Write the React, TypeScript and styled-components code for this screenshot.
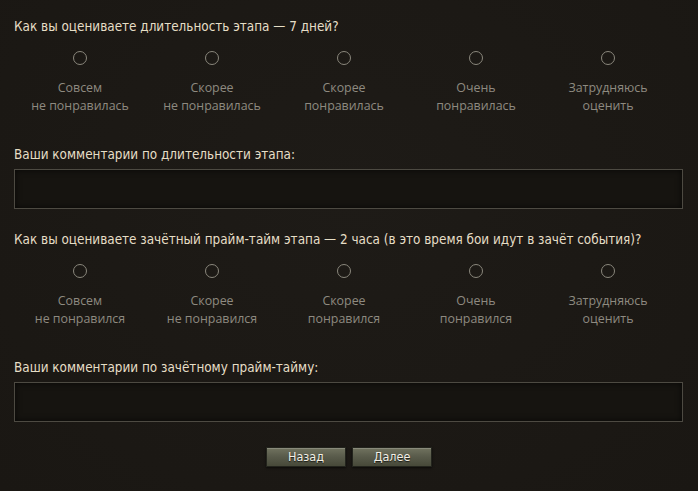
import React from "react";
import styled, { createGlobalStyle } from "styled-components";

const Global = createGlobalStyle`
  html, body { margin: 0; padding: 0; background: #1c1915; }
  body { width: 698px; height: 491px; overflow: hidden; }
`;

const Page = styled.div`
  width: 698px;
  height: 491px;
  box-sizing: border-box;
  padding: 19px 15px 0 14px;
  background: radial-gradient(ellipse at 50% 40%, #1e1b17 0%, #1a1713 100%);
  display: flex;
  flex-direction: column;
`;

const Question = styled.div`
  font-family: "DejaVu Sans Condensed", "DejaVu Sans", sans-serif;
  font-size: 13.4px;
  line-height: 16px;
  color: #e6dec6;
  white-space: nowrap;
`;

const Options = styled.div`
  display: grid;
  grid-template-columns: repeat(5, 132px);
  margin-top: 16px;
`;

const Option = styled.div`
  display: flex;
  flex-direction: column;
  align-items: center;
`;

const Radio = styled.span`
  width: 14px;
  height: 14px;
  box-sizing: border-box;
  border: 1.6px solid #8a877c;
  border-radius: 50%;
`;

const OptLabel = styled.div`
  margin-top: 14px;
  font-family: "Open Sans", sans-serif;
  font-size: 12.4px;
  line-height: 18px;
  color: #8e8a80;
  text-align: center;
  white-space: nowrap;
`;

const CommentLabel = styled.div`
  margin-top: 32px;
  font-family: "DejaVu Sans Condensed", "DejaVu Sans", sans-serif;
  font-size: 13.4px;
  line-height: 16px;
  color: #e6dec6;
`;

const Box = styled.div`
  margin-top: 6px;
  width: 669px;
  height: 40px;
  box-sizing: border-box;
  border: 1px solid #4d4a42;
  background: #161410;
  box-shadow: inset 0 0 6px rgba(0, 0, 0, 0.7);
`;

const Spacer = styled.div<{ $h: number }>`
  height: ${(p) => p.$h}px;
`;

const Buttons = styled.div`
  display: flex;
  justify-content: center;
  gap: 6px;
  margin-top: 25px;
  padding-left: 1px;
`;

const Btn = styled.button`
  width: 80px;
  height: 20px;
  box-sizing: border-box;
  padding: 0;
  border: 1px solid #23241d;
  background: linear-gradient(180deg, #71735f 0%, #5a5c4c 45%, #474939 100%);
  box-shadow: inset 0 1px 0 rgba(255, 255, 255, 0.18), 0 1px 2px rgba(0, 0, 0, 0.6);
  color: #f2f0e6;
  font-family: "DejaVu Sans Condensed", "DejaVu Sans", sans-serif;
  font-size: 12.5px;
  line-height: 18px;
  text-shadow: 0 1px 1px rgba(0, 0, 0, 0.7);
`;

type Q = { title: string; labels: [string, string][]; comment: string };

const q1: Q = {
  title: "Как вы оцениваете длительность этапа — 7 дней?",
  labels: [
    ["Совсем", "не понравилась"],
    ["Скорее", "не понравилась"],
    ["Скорее", "понравилась"],
    ["Очень", "понравилась"],
    ["Затрудняюсь", "оценить"],
  ],
  comment: "Ваши комментарии по длительности этапа:",
};

const q2: Q = {
  title:
    "Как вы оцениваете зачётный прайм-тайм этапа — 2 часа (в это время бои идут в зачёт события)?",
  labels: [
    ["Совсем", "не понравился"],
    ["Скорее", "не понравился"],
    ["Скорее", "понравился"],
    ["Очень", "понравился"],
    ["Затрудняюсь", "оценить"],
  ],
  comment: "Ваши комментарии по зачётному прайм-тайму:",
};

function OptionRow({ q }: { q: Q }) {
  return (
    <Options>
      {q.labels.map(([a, b], i) => (
        <Option key={i}>
          <Radio />
          <OptLabel>
            {a}
            <br />
            {b}
          </OptLabel>
        </Option>
      ))}
    </Options>
  );
}

export default function App() {
  return (
    <>
      <Global />
      <Page>
        <Question>{q1.title}</Question>
        <OptionRow q={q1} />
        <CommentLabel>{q1.comment}</CommentLabel>
        <Box />
        <Spacer $h={23} />
        <Question>{q2.title}</Question>
        <OptionRow q={q2} />
        <CommentLabel>{q2.comment}</CommentLabel>
        <Box />
        <Buttons>
          <Btn>Назад</Btn>
          <Btn>Далее</Btn>
        </Buttons>
      </Page>
    </>
  );
}
